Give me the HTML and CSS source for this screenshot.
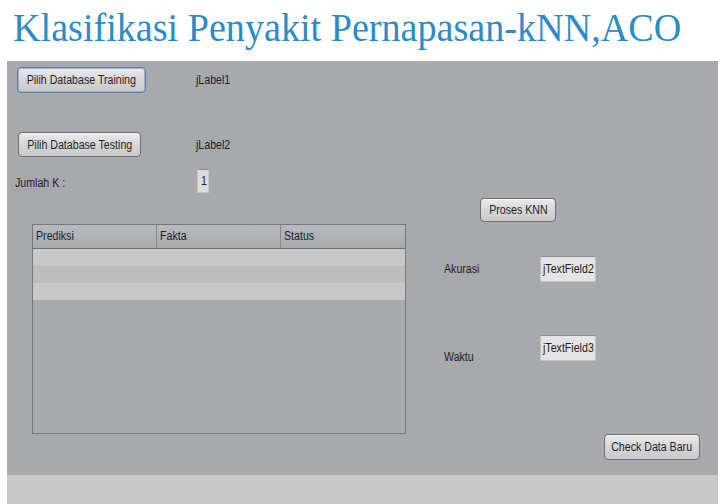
FILE: index.html
```html
<!DOCTYPE html>
<html>
<head>
<meta charset="utf-8">
<link rel="stylesheet" href="styles.css">
</head>
<body>
<h1 class="title"><span class="title-text">Klasifikasi Penyakit Pernapasan-kNN,ACO</span></h1>
<div class="window">
  <div class="panel">
    <div class="row row1">
      <button class="btn btn-train focused"><span class="t">Pilih Database Training</span></button>
      <span class="lbl"><span class="t">jLabel1</span></span>
    </div>
    <div class="row row2">
      <button class="btn btn-test"><span class="t">Pilih Database Testing</span></button>
      <span class="lbl"><span class="t">jLabel2</span></span>
    </div>
    <div class="row row3">
      <span class="lbl lbl-k"><span class="t">Jumlah K :</span></span>
      <span class="field field-k"><span class="t">1</span></span>
    </div>
    <div class="lower">
      <div class="table">
        <div class="thead">
          <div class="th"><span class="t">Prediksi</span></div>
          <div class="th"><span class="t">Fakta</span></div>
          <div class="th"><span class="t">Status</span></div>
        </div>
        <div class="tr odd"></div>
        <div class="tr even"></div>
        <div class="tr odd"></div>
      </div>
      <div class="side">
        <button class="btn btn-proses"><span class="t">Proses KNN</span></button>
        <div class="frow frow-akurasi">
          <span class="lbl"><span class="t">Akurasi</span></span>
          <span class="field field-txt"><span class="t">jTextField2</span></span>
        </div>
        <div class="frow frow-waktu">
          <span class="lbl"><span class="t">Waktu</span></span>
          <span class="field field-txt"><span class="t">jTextField3</span></span>
        </div>
        <button class="btn btn-check"><span class="t">Check Data Baru</span></button>
      </div>
    </div>
  </div>
  <div class="strip"></div>
</div>
</body>
</html>
```
FILE: styles.css
```css
html, body {
  margin: 0;
  padding: 0;
  background: #ffffff;
}
body {
  width: 728px;
  height: 504px;
  overflow: hidden;
  font-family: "Liberation Sans", Arial, sans-serif;
  font-size: 12.5px;
  color: #1c1c1c;
}
.t {
  display: inline-block;
  white-space: nowrap;
  transform: scaleX(0.85);
  transform-origin: left center;
}
.btn .t {
  transform-origin: center center;
}
.title {
  margin: 0;
  height: 61px;
  padding-left: 13px;
  box-sizing: border-box;
  font-family: "Liberation Serif", "Times New Roman", serif;
  font-weight: normal;
  font-size: 41px;
  line-height: 54px;
  color: #2b8bc6;
  white-space: nowrap;
}
.title-text {
  display: inline-block;
  transform: scaleX(0.93);
  transform-origin: left center;
}
.window {
  margin-left: 7px;
  width: 711px;
}
.panel {
  height: 414px;
  background: #a8a9ad;
  box-sizing: border-box;
  padding-top: 6px;
}
.strip {
  height: 29px;
  background: #c8c8c8;
}
.row {
  display: flex;
  align-items: center;
}
.btn {
  font-family: inherit;
  font-size: 12.5px;
  color: #1e1e2a;
  background: linear-gradient(#ececec, #d6d6d6 50%, #c9c9c9);
  border: 1px solid #6c6d71;
  border-radius: 4px;
  padding: 0;
  box-sizing: border-box;
  box-shadow: inset 0 1px 0 #f6f6f6;
  display: flex;
  align-items: center;
  justify-content: center;
}
.btn.focused {
  border-color: #5a7da8;
  box-shadow: inset 0 0 0 1px #9fb4cc;
}
.lbl {
  color: #1c1c1c;
}
.row1 {
  height: 26px;
}
.btn-train {
  margin-left: 10px;
  width: 129px;
  height: 26px;
}
.row1 .lbl {
  margin-left: 50px;
  margin-top: 0;
}
.row2 {
  margin-top: 39px;
  height: 25px;
}
.btn-test {
  margin-left: 11px;
  width: 123px;
  height: 25px;
}
.row2 .lbl {
  margin-left: 55px;
  margin-top: 1px;
}
.row3 {
  margin-top: 12px;
  height: 24px;
}
.lbl-k {
  margin-left: 8px;
  width: 182px;
  margin-top: 3px;
}
.field {
  background: #e4e4e4;
  border: 1px solid #c2c3c6;
  border-top-color: #8e8f93;
  box-sizing: border-box;
  display: flex;
  align-items: center;
  color: #1c1c1c;
}
.field-k {
  width: 12px;
  height: 24px;
  padding-left: 3px;
  background: #dcdcdc;
}
.lower {
  display: flex;
  margin-top: 5px;
}
.table {
  margin-left: 25px;
  margin-top: 26px;
  width: 374px;
  height: 210px;
  border: 1px solid #76777b;
  box-sizing: border-box;
  background: #a8a9ad;
}
.thead {
  display: grid;
  grid-template-columns: 124px 124px 1fr;
  height: 24px;
  border-bottom: 1px solid #6c6d71;
  box-sizing: border-box;
  background: linear-gradient(#b9babe, #a9aaae);
}
.th {
  padding-left: 3px;
  line-height: 23px;
  border-right: 1px solid #86878b;
  color: #1c1c1c;
}
.th:last-child {
  border-right: none;
}
.tr {
  height: 17px;
}
.tr.odd {
  background: #c8c8c8;
}
.tr.even {
  background: #bdbdbd;
}
.side {
  margin-left: 38px;
  width: 260px;
  display: flex;
  flex-direction: column;
}
.btn-proses {
  margin-left: 36px;
  width: 76px;
  height: 24px;
}
.frow {
  display: flex;
  height: 26px;
}
.frow .lbl {
  width: 96px;
}
.frow-akurasi {
  margin-top: 34px;
  align-items: center;
}
.frow-waktu {
  margin-top: 53px;
  align-items: flex-end;
}
.frow-waktu .lbl {
  margin-bottom: -3px;
}
.field-txt {
  width: 56px;
  height: 26px;
  padding-left: 2px;
}
.btn-check {
  margin-top: 73px;
  margin-left: 160px;
  width: 96px;
  height: 26px;
}
```
